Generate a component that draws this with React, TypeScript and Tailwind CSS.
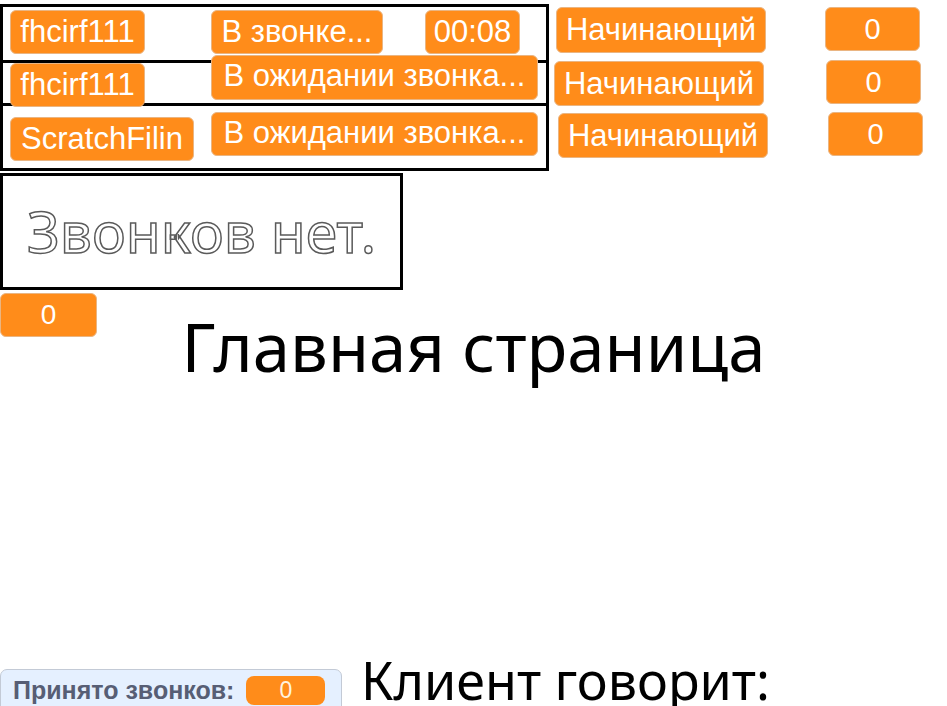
const pill =
  "flex items-center justify-center rounded-[6px] border border-[#eab582] bg-[#ff8c1a] text-white whitespace-nowrap font-['Liberation_Sans',Arial,sans-serif] text-[31px] leading-none";

function Readout({ text, className }: { text: string; className: string }) {
  return <div className={`${pill} ${className}`}>{text}</div>;
}

export default function App() {
  return (
    <div className="w-[947px] h-[706px] overflow-hidden bg-white">
      {/* top block: calls table + levels + scores */}
      <div className="flex h-[171px] items-start">
        <div className="mt-[4px] flex h-[167px] w-[549px] flex-col border-[3px] border-black">
          <div className="grid h-[56px] grid-cols-[208px_1fr] border-b-[3px] border-black">
            <Readout text="fhcirf111" className="ml-[7px] mt-[3px] h-[44px] w-[135px] pb-[1px]" />
            <div className="flex items-start">
              <Readout text="В звонке..." className="mt-[3px] h-[44px] w-[172px] pb-[1px]" />
              <Readout text="00:08" className="ml-[42px] mt-[3px] h-[44px] w-[95px] pb-[1px]" />
            </div>
          </div>
          <div className="grid h-[43px] grid-cols-[208px_1fr] border-b-[3px] border-black">
            <Readout text="fhcirf111" className="relative z-10 ml-[7px] h-[44px] w-[135px] pb-[1px]" />
            <Readout text="В ожидании звонка..." className="relative z-10 -mt-[8px] h-[45px] w-[327px] pb-[4px]" />
          </div>
          <div className="grid flex-1 grid-cols-[208px_1fr]">
            <Readout text="ScratchFilin" className="ml-[7px] mt-[11px] h-[44px] w-[184px] pb-[1px]" />
            <Readout text="В ожидании звонка..." className="mt-[6px] h-[44px] w-[327px] pb-[4px]" />
          </div>
        </div>

        <div className="ml-[5px] flex flex-col items-start">
          <Readout text="Начинающий" className="ml-[2px] mt-[7px] h-[46px] w-[210px] pb-[1px]" />
          <Readout text="Начинающий" className="mt-[8px] h-[45px] w-[210px] pb-[1px]" />
          <Readout text="Начинающий" className="ml-[4px] mt-[7px] h-[45px] w-[210px] pb-[1px]" />
        </div>

        <div className="ml-[57px] flex flex-col items-start">
          <Readout text="0" className="mt-[7px] h-[44px] w-[95px] !text-[29px]" />
          <Readout text="0" className="ml-[1px] mt-[9px] h-[44px] w-[95px] !text-[29px]" />
          <Readout text="0" className="ml-[3px] mt-[8px] h-[44px] w-[95px] !text-[29px]" />
        </div>
      </div>

      {/* empty calls label */}
      <div className="mt-[2px] flex h-[117px] w-[403px] items-center justify-center border-[3px] border-black">
        <span className="font-['Noto_Sans',sans-serif] text-[57px] leading-none text-white [-webkit-text-stroke:1.5px_#5a5a5a]">
          Звонков нет.
        </span>
      </div>

      <Readout text="0" className="mt-[3px] h-[44px] w-[97px] !text-[28px]" />

      <h1 className="-mt-[24px] text-center font-['Noto_Sans',sans-serif] text-[67px] leading-none text-black">
        Главная страница
      </h1>

      <div className="mt-[274px] flex items-start">
        <div className="mt-[15px] flex h-[44px] w-[342px] items-start rounded-[7px] border border-[#c3cad6] bg-[#e5f0ff] pt-[6px]">
          <span className="ml-[12px] mt-[2px] font-['Liberation_Sans',Arial,sans-serif] text-[25px] font-bold leading-none text-[#575e75]">
            Принято звонков:
          </span>
          <div className="ml-[12px] flex h-[29px] w-[79px] items-center justify-center rounded-[8px] bg-[#ff8c1a] font-['Liberation_Sans',Arial,sans-serif] text-[23px] leading-none text-[#fff3e0]">
            0
          </div>
        </div>
        <div className="ml-[19px] font-['Noto_Sans',sans-serif] text-[52px] leading-none text-black">
          Клиент говорит:
        </div>
      </div>
    </div>
  );
}
